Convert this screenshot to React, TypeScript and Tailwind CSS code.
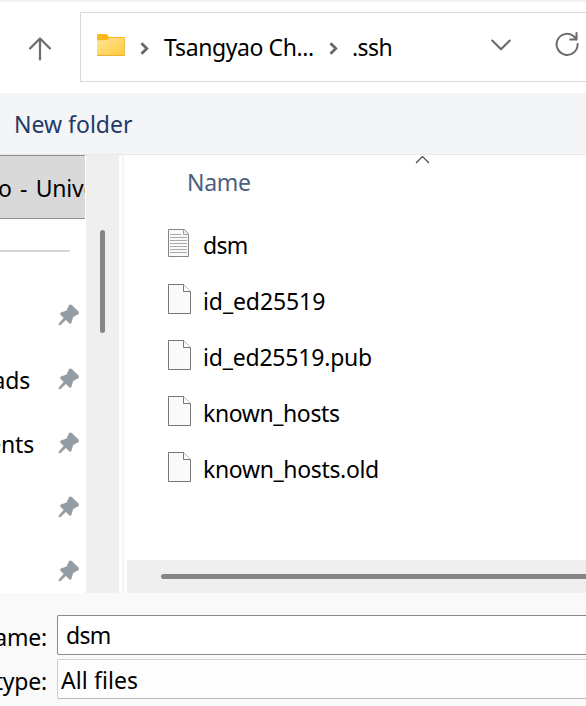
import React from "react";

const files = [
  { name: "dsm", text: true, track: "tracking-[-0.7px]" },
  { name: "id_ed25519", text: false, track: "tracking-[-0.1px]" },
  { name: "id_ed25519.pub", text: false, track: "tracking-[-0.2px]" },
  { name: "known_hosts", text: false, track: "tracking-[-0.4px]" },
  { name: "known_hosts.old", text: false, track: "tracking-[-0.35px]" },
];

const places = ["", "Downloads", "Documents", "", ""];

function UpArrow() {
  return (
    <svg width="24" height="26" viewBox="0 0 24 26" fill="none" stroke="#6b6b6b" strokeWidth="2.2" strokeLinecap="round" strokeLinejoin="round">
      <path d="M12 23.5V2.5M2 12.5L12 2.5L22 12.5" />
    </svg>
  );
}

function Folder() {
  return (
    <svg width="28" height="23" viewBox="0 0 28 23">
      <defs>
        <linearGradient id="folder" x1="0" y1="0" x2="1" y2="1">
          <stop offset="0" stopColor="#ffe6a0" />
          <stop offset="1" stopColor="#ffc933" />
        </linearGradient>
      </defs>
      <path d="M0 1.2Q0 0 1.2 0H9.4L12.3 3H27Q28 3 28 4V12H0Z" fill="#fbb917" />
      <path d="M0 6.3H9.7L12.6 4H27.6V21.5H0Z" fill="url(#folder)" />
      <path d="M0 21.4H28" stroke="#e7ad2b" />
      <path d="M27.6 4V21" stroke="#f2bc3f" strokeWidth="0.8" />
    </svg>
  );
}

function Crumb() {
  return (
    <svg width="9" height="13" viewBox="0 0 9 13" fill="none" stroke="#686868" strokeWidth="2.8">
      <path d="M1.5 1.2L6.8 6.5L1.5 11.8" />
    </svg>
  );
}

function Refresh() {
  return (
    <svg width="24" height="24" viewBox="0 0 24 24" fill="none" stroke="#6b6b6b" strokeWidth="2" strokeLinecap="round">
      <path d="M22.6 12A10.5 10.5 0 1 1 18.7 4.2L21.3 7M21.5 1V7.5H15.2" />
    </svg>
  );
}

function Pin() {
  return (
    <svg width="22" height="22" viewBox="0 0 22 22" fill="#929da4">
      <path d="M10.8 1.4Q12.2 -.1 13.8 1.1L20.1 7Q21.8 8.8 20.2 10.2L15.2 13.1L13.5 18.6Q12.7 20.7 11.1 19.2L7.9 15.9L2.4 21.1Q1.4 21.8.8 21Q.2 20.3.9 19.4L5.7 13.8L2.8 11.2Q1.3 9.5 3 8.5L8.6 6.4Z" />
    </svg>
  );
}

function Page({ text }: { text: boolean }) {
  if (text) {
    return (
      <svg width="21" height="28" viewBox="0 0 21 28" fill="none">
        <path d="M.5.5H16.5L20.5 5V27.5H.5Z" fill="#fafafa" stroke="#858585" />
        <path d="M15.5.5V5.5H20.5" fill="#ededed" stroke="#a2a2a2" />
        <path d="M2 5.5H13M2 8.5H19M2 11.5H19M2 14.5H19M2 17.5H19M2 20.5H19M2 23.5H19" stroke="#aaa" />
      </svg>
    );
  }
  return (
    <svg width="23" height="30" viewBox="0 0 23 30" fill="none" stroke="#777">
      <path d="M.5.5H15.5L22.5 7.5V29.5H.5Z" fill="#fafafa" />
      <path d="M15.5.5V7.5H22.5" fill="#fff" />
    </svg>
  );
}

export default function App() {
  return (
    <div className="flex h-[706px] w-[586px] flex-col overflow-hidden bg-white font-['Noto_Sans','Open_Sans',sans-serif] text-[23px] leading-8 text-black">
      <header className="flex h-[93px] shrink-0 border-t-2 border-[#f6f1ef] pt-[10px]">
        <div className="flex w-20 shrink-0 justify-center pt-[24px]">
          <UpArrow />
        </div>
        <div className="flex h-[70px] w-[520px] shrink-0 items-start border border-[#d9d9d9]">
          <div className="ml-4 mt-[21px]"><Folder /></div>
          <div className="ml-[15px] mt-[29px]"><Crumb /></div>
          <span className="ml-[15px] mt-[18px] w-[152px] whitespace-nowrap tracking-[-0.4px]">Tsangyao Ch...</span>
          <div className="ml-[13px] mt-[29px]"><Crumb /></div>
          <span className="ml-[14px] mt-[18px] w-[139px] whitespace-nowrap tracking-[-0.6px]">.ssh</span>
          <svg className="mt-[25px]" width="20" height="14" viewBox="0 0 20 14" fill="none" stroke="#6b6b6b" strokeWidth="2.1" strokeLinecap="round" strokeLinejoin="round">
            <path d="M1.2 2.5L10 11.3L18.8 2.5" />
          </svg>
          <div className="ml-11 mt-[19px]"><Refresh /></div>
        </div>
      </header>

      <div className="flex h-[62px] shrink-0 items-center border-b border-[#e6e7e9] bg-[#f4f5f7] pl-[14px] pt-px text-[#1f3a68]">
        <span className="whitespace-nowrap tracking-[0px]">New folder</span>
      </div>

      <main className="flex h-[438px] shrink-0">
        <nav className="flex w-[85px] shrink-0 flex-col overflow-hidden">
          <div className="flex h-16 shrink-0 items-center justify-start border-y border-[#929292] bg-[#d9d9d9] pt-px">
            <span className="-ml-[2px] whitespace-nowrap tracking-[-0.2px] [word-spacing:2.6px]">o - University</span>
          </div>
          <div className="mt-[31px] h-[2px] w-[70px] shrink-0 bg-[#d6d6d6]" />
          <div className="mt-[31px] flex flex-col">
            {places.map((place, i) => (
              <div key={i} className="flex h-16 shrink-0 items-center">
                <div className={i === 2 ? "flex w-[34px] justify-end" : "flex w-[30px] justify-end"}>
                  <span className="pt-px tracking-[-0.2px]">{place}</span>
                </div>
                <div className={i === 2 ? "ml-6" : "ml-7"}><Pin /></div>
              </div>
            ))}
          </div>
        </nav>
        <div className="ml-px flex w-[33px] shrink-0 justify-center bg-[#efefef] pt-[75px]">
          <div className="h-[103px] w-[5px] rounded-full bg-[#858585]" />
        </div>
        <div className="ml-[3px] w-[2px] shrink-0 bg-[#f5f5f5]" />
        <section className="flex min-w-0 flex-1 flex-col pl-[3px]">
          <div className="flex h-[60px] shrink-0">
            <span className="ml-[60px] w-[228px] pt-[11px] tracking-[-0.3px] text-[#4c607f]">Name</span>
            <svg width="15" height="9" viewBox="0 0 15 9" fill="none" stroke="#444" strokeWidth="1.1">
              <path d="M1 8L7.5 1.5L14 8" />
            </svg>
          </div>
          <ul className="flex flex-col">
            {files.map((file) => (
              <li key={file.name} className="flex h-14 items-center pl-[41px]">
                <div className="w-[35px]"><Page text={file.text} /></div>
                <span className={"whitespace-nowrap pt-[3px] " + file.track}>{file.name}</span>
              </li>
            ))}
          </ul>
          <div className="mt-auto flex h-[33px] shrink-0 items-center bg-[#efefef] pl-[34px]">
            <div className="h-[5px] flex-1 rounded-l-full bg-[#858585]" />
          </div>
        </section>
      </main>

      <footer className="flex flex-1 flex-col gap-1 bg-[#f9f9f9] pt-[22px]">
        <div className="flex h-10 shrink-0">
          <div className="mr-[10px] flex w-[47px] shrink-0 justify-end pt-[6px]">
            <span className="tracking-[-0.2px]">name:</span>
          </div>
          <div className="flex flex-1 items-start rounded-l-[2px] border border-r-0 border-[#8a8a8a] bg-white pl-2 pt-[3px] tracking-[-0.7px]">dsm</div>
        </div>
        <div className="flex h-10 shrink-0">
          <div className="mr-[10px] flex w-[47px] shrink-0 justify-end pt-[6px]">
            <span className="tracking-[-0.2px]">type:</span>
          </div>
          <div className="flex flex-1 items-center rounded-l-[2px] border border-r-0 border-[#cfcfcf] border-b-[#bbb] bg-[#fdfdfd] pl-[3px] pt-px tracking-[0.1px]">All files</div>
        </div>
      </footer>
    </div>
  );
}
